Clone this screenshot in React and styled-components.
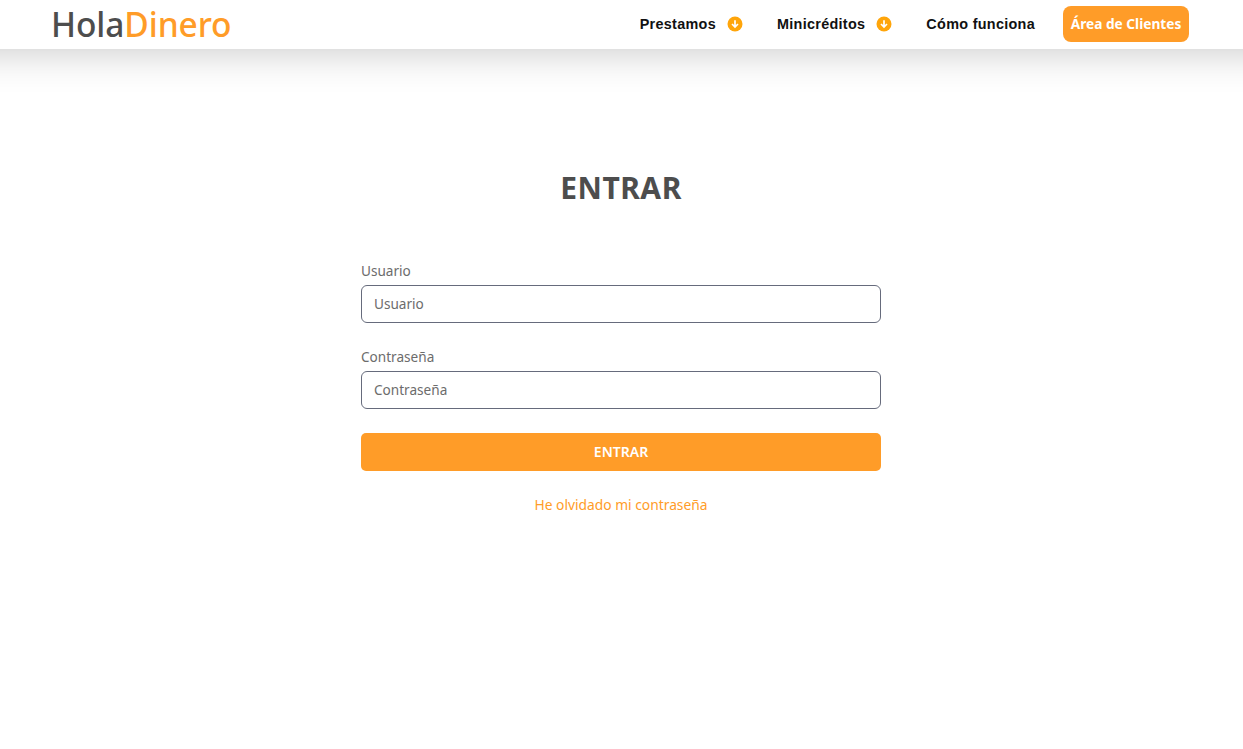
import React from "react";
import styled, { createGlobalStyle } from "styled-components";

const GlobalStyle = createGlobalStyle`
  html, body {
    margin: 0;
    padding: 0;
    background: #fff;
    font-family: "Noto Sans", "Open Sans", sans-serif;
  }
  * {
    box-sizing: border-box;
  }
`;

const Page = styled.div`
  height: 749px;
  overflow: hidden;
  background: #fff;
`;

const Header = styled.header`
  height: 49px;
  background: #fff;
  display: flex;
  align-items: center;
  justify-content: space-between;
  padding: 0 54px 1px 51px;
  box-shadow: 0 -60px 40px 60px rgba(0, 0, 0, 0.24);
`;

const Logo = styled.div`
  font-size: 33.5px;
  font-weight: 500;
  line-height: 49px;
  letter-spacing: -0.1px;
  color: #4d4d4d;
  span {
    color: #ff9c28;
  }
`;

const Nav = styled.nav`
  display: flex;
  align-items: center;
`;

const NavItem = styled.a`
  display: flex;
  align-items: center;
  gap: 11px;
  margin-right: ${(p) => p.$space}px;
  font-family: "Liberation Sans", Arial, sans-serif;
  font-size: 14.4px;
  font-weight: 700;
  letter-spacing: 0.3px;
  color: #111;
`;

const ArrowIcon = () => (
  <svg width="16" height="16" viewBox="0 0 16 16">
    <circle cx="8" cy="8" r="7.5" fill="#ffa50a" />
    <path d="M8 4.2v6.8M5 8l3 3 3-3" fill="none" stroke="#fff" strokeWidth="1.7" />
  </svg>
);

const ClientButton = styled.a`
  width: 126px;
  height: 36px;
  padding-bottom: 1px;
  border-radius: 8px;
  background: #ff9c28;
  color: #fff;
  display: flex;
  align-items: center;
  justify-content: center;
  font-size: 13.7px;
  font-weight: 700;
  white-space: nowrap;
`;

const Content = styled.div`
  padding-right: 1px;
`;

const Main = styled.main`
  width: 520px;
  margin: 0 auto;
  padding-top: 119px;
`;

const Title = styled.h1`
  margin: 0 0 53px;
  font-size: 30px;
  line-height: 40px;
  font-weight: 700;
  letter-spacing: 0.5px;
  text-align: center;
  color: #4d4d4d;
`;

const Field = styled.div`
  margin-bottom: 24px;
`;

const Label = styled.label`
  display: block;
  font-size: 13.6px;
  line-height: 20px;
  margin-bottom: 4px;
  color: #6c6c6c;
`;

const Input = styled.input`
  display: block;
  width: 100%;
  height: 38px;
  padding: 0 12px 2px;
  border: 1px solid #666b7c;
  border-radius: 6px;
  background: #fff;
  font-family: inherit;
  font-size: 13.6px;
  color: #6c6c6c;
  &::placeholder {
    color: #6c6c6c;
    opacity: 1;
  }
`;

const Submit = styled.button`
  display: block;
  width: 100%;
  height: 38px;
  padding: 0 0 2px;
  border: 0;
  border-radius: 5px;
  background: #ff9c28;
  color: #fff;
  font-family: inherit;
  font-size: 14px;
  font-weight: 600;
`;

const Forgot = styled.a`
  display: block;
  margin-top: 24px;
  text-align: center;
  font-size: 13.8px;
  line-height: 20px;
  color: #ff9c28;
`;

const App = () => {
  return (
    <Page>
      <GlobalStyle />
      <Header>
        <Logo>
          Hola<span>Dinero</span>
        </Logo>
        <Nav>
          <NavItem $space={34}>
            Prestamos <ArrowIcon />
          </NavItem>
          <NavItem $space={34}>
            Minicréditos <ArrowIcon />
          </NavItem>
          <NavItem $space={28}>Cómo funciona</NavItem>
          <ClientButton>Área de Clientes</ClientButton>
        </Nav>
      </Header>
      <Content>
        <Main>
          <Title>ENTRAR</Title>
          <Field>
            <Label>Usuario</Label>
            <Input placeholder="Usuario" />
          </Field>
          <Field>
            <Label>Contraseña</Label>
            <Input placeholder="Contraseña" />
          </Field>
          <Submit>ENTRAR</Submit>
          <Forgot>He olvidado mi contraseña</Forgot>
        </Main>
      </Content>
    </Page>
  );
};

export default App;
